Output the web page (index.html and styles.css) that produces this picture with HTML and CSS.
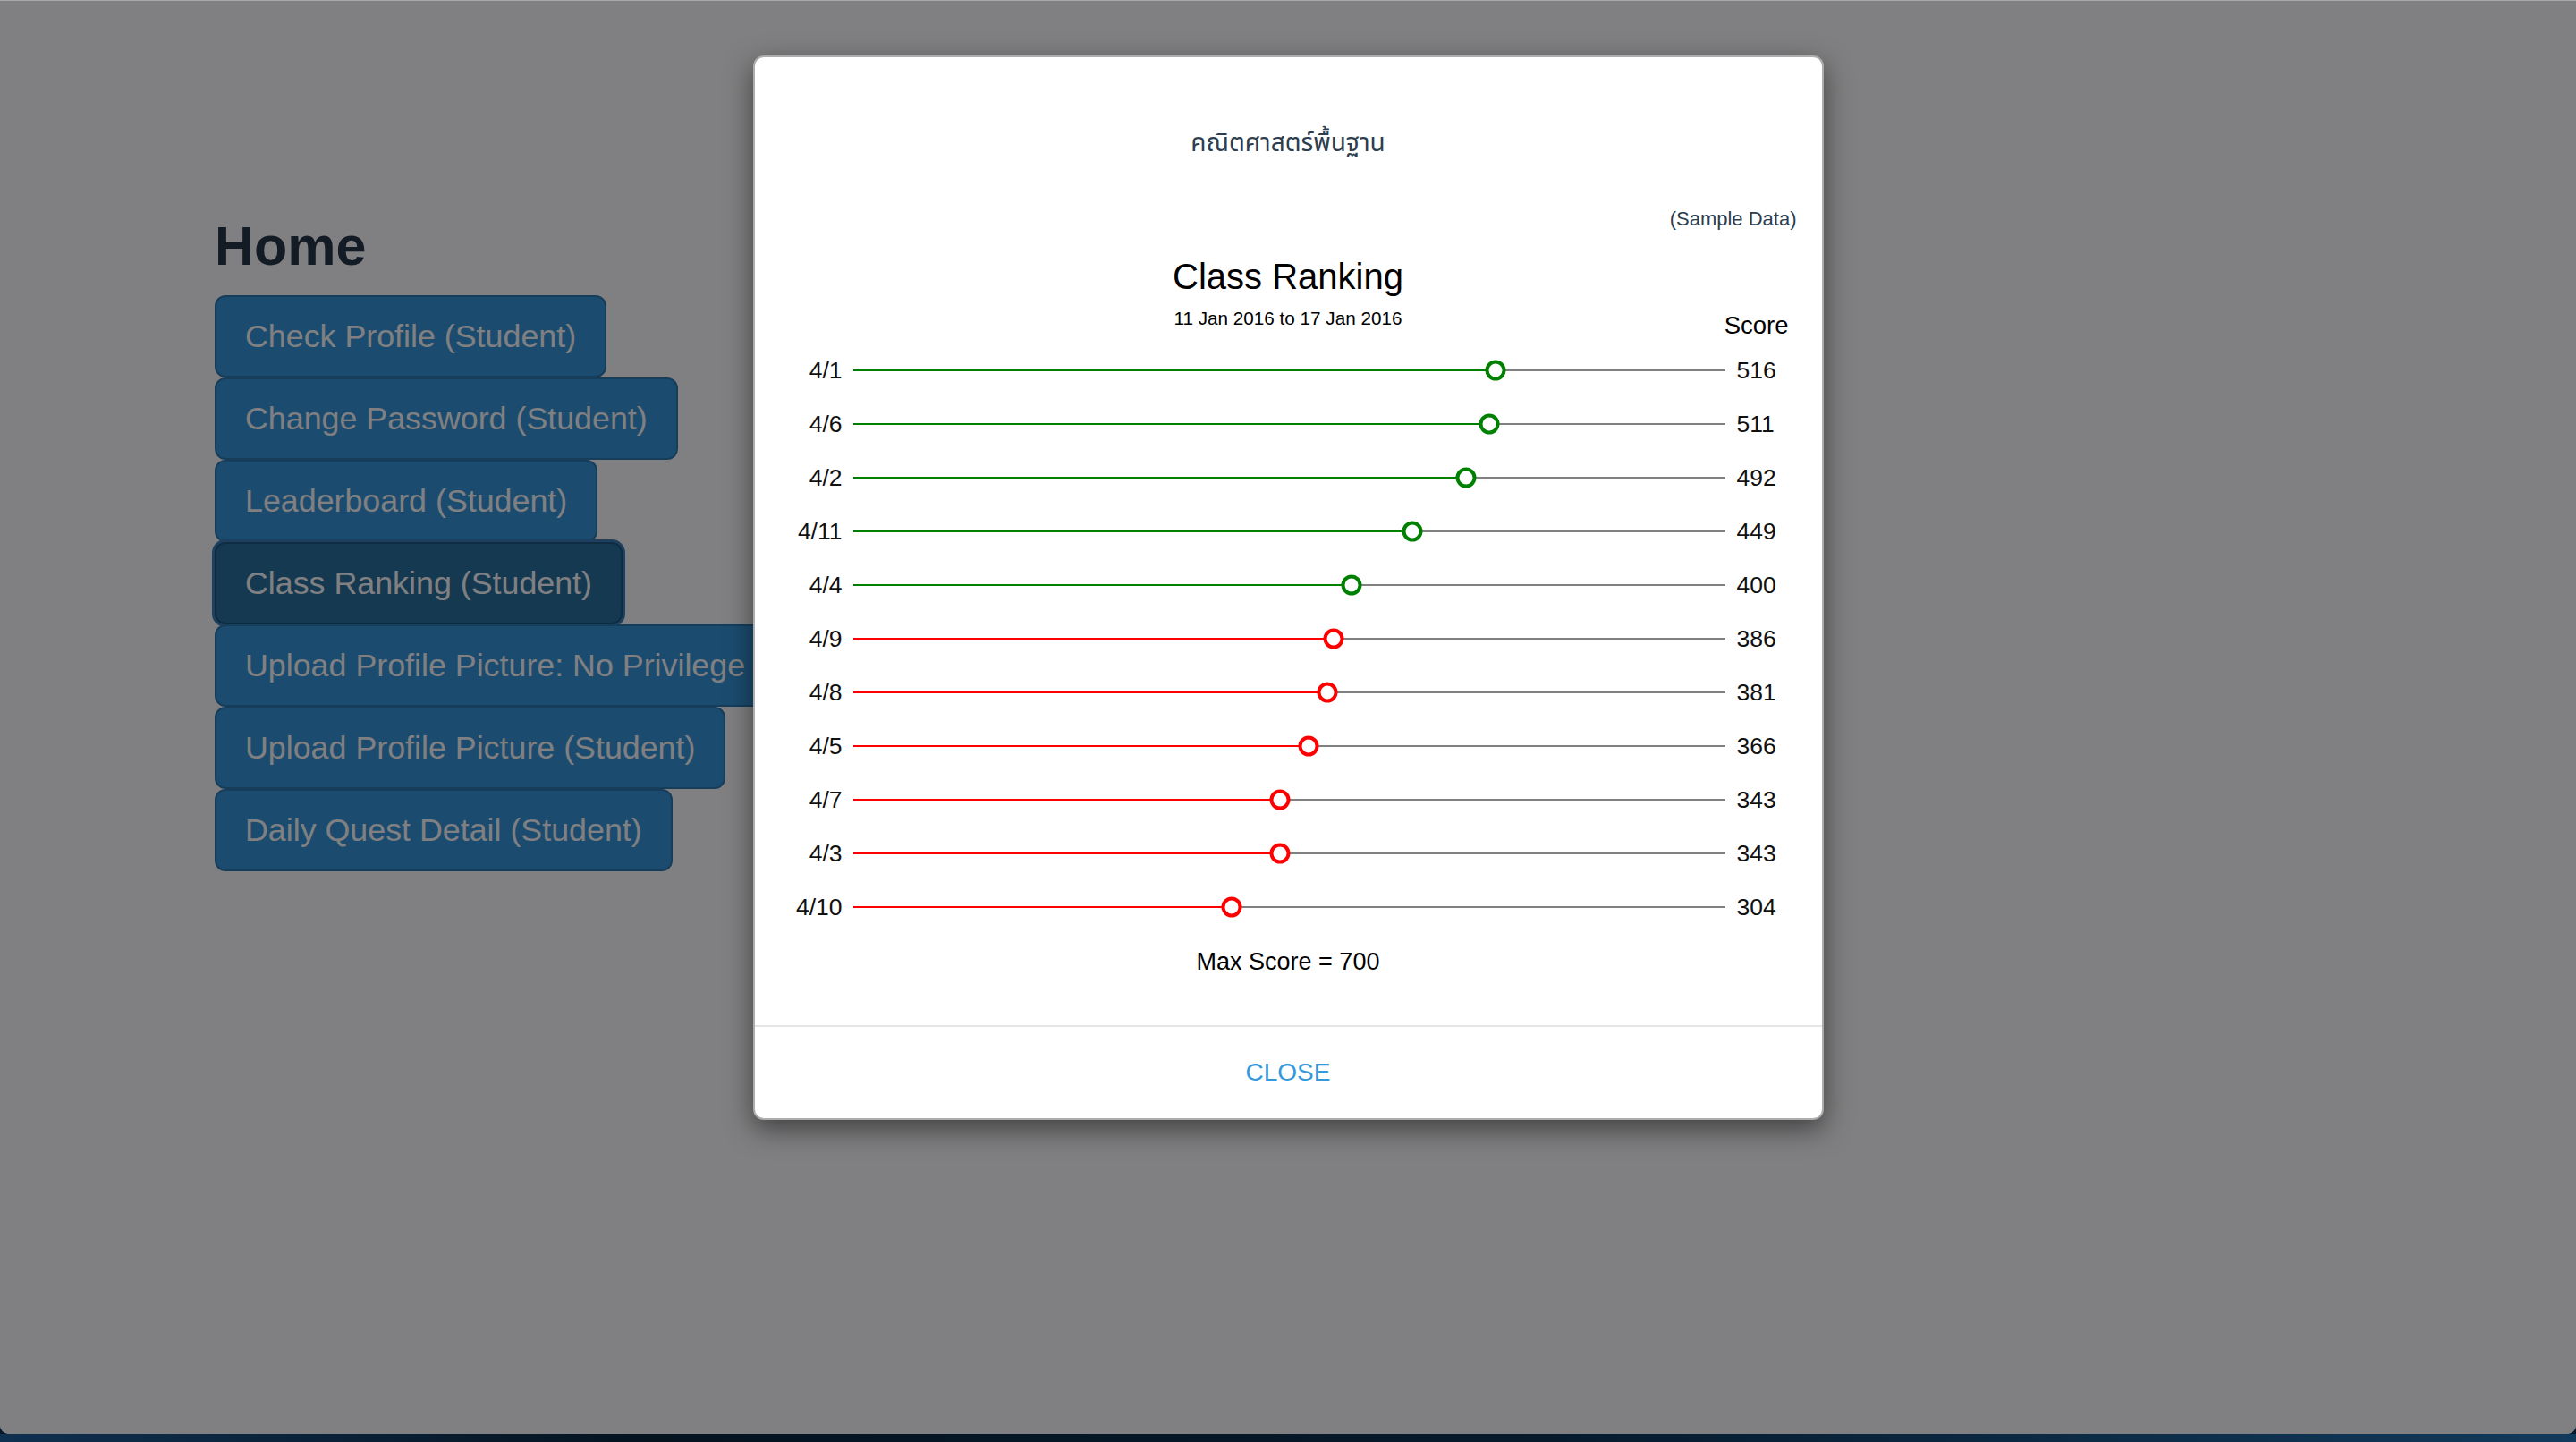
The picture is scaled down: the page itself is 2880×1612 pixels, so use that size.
FILE: index.html
```html
<!DOCTYPE html>
<html lang="en">
<head>
<meta charset="utf-8">
<title>Class Ranking</title>
<link rel="stylesheet" href="styles.css">
</head>
<body>
<div class="window">
  <main class="page">
    <h2 class="page-title">Home</h2>
    <div class="menu">
      <button class="btn">Check Profile (Student)</button>
      <button class="btn">Change Password (Student)</button>
      <button class="btn">Leaderboard (Student)</button>
      <button class="btn btn-active">Class Ranking (Student)</button>
      <button class="btn">Upload Profile Picture: No Privilege</button>
      <button class="btn">Upload Profile Picture (Student)</button>
      <button class="btn">Daily Quest Detail (Student)</button>
    </div>
  </main>

  <div class="overlay">
    <div class="modal">
      <div class="modal-head">
        <h4 class="subject">คณิตศาสตร์พื้นฐาน</h4>
      </div>
      <div class="modal-body">
        <div class="sample">(Sample Data)</div>
        <div class="chart-head">
          <div></div>
          <div class="titles">
            <div class="chart-title">Class Ranking</div>
            <div class="chart-date">11 Jan 2016 to 17 Jan 2016</div>
          </div>
          <div class="score-head">Score</div>
        </div>
        <div class="rows">
          <div class="row good"><span class="label">4/1</span><div class="track"><div class="fill" style="width:73.714%"></div><span class="dot" style="left:73.714%"></span></div><span class="value">516</span></div>
          <div class="row good"><span class="label">4/6</span><div class="track"><div class="fill" style="width:73%"></div><span class="dot" style="left:73%"></span></div><span class="value">511</span></div>
          <div class="row good"><span class="label">4/2</span><div class="track"><div class="fill" style="width:70.286%"></div><span class="dot" style="left:70.286%"></span></div><span class="value">492</span></div>
          <div class="row good"><span class="label">4/11</span><div class="track"><div class="fill" style="width:64.143%"></div><span class="dot" style="left:64.143%"></span></div><span class="value">449</span></div>
          <div class="row good"><span class="label">4/4</span><div class="track"><div class="fill" style="width:57.143%"></div><span class="dot" style="left:57.143%"></span></div><span class="value">400</span></div>
          <div class="row bad"><span class="label">4/9</span><div class="track"><div class="fill" style="width:55.143%"></div><span class="dot" style="left:55.143%"></span></div><span class="value">386</span></div>
          <div class="row bad"><span class="label">4/8</span><div class="track"><div class="fill" style="width:54.429%"></div><span class="dot" style="left:54.429%"></span></div><span class="value">381</span></div>
          <div class="row bad"><span class="label">4/5</span><div class="track"><div class="fill" style="width:52.286%"></div><span class="dot" style="left:52.286%"></span></div><span class="value">366</span></div>
          <div class="row bad"><span class="label">4/7</span><div class="track"><div class="fill" style="width:49%"></div><span class="dot" style="left:49%"></span></div><span class="value">343</span></div>
          <div class="row bad"><span class="label">4/3</span><div class="track"><div class="fill" style="width:49%"></div><span class="dot" style="left:49%"></span></div><span class="value">343</span></div>
          <div class="row bad"><span class="label">4/10</span><div class="track"><div class="fill" style="width:43.429%"></div><span class="dot" style="left:43.429%"></span></div><span class="value">304</span></div>
        </div>
        <div class="max">Max Score = 700</div>
      </div>
      <div class="modal-foot">
        <a class="close" href="#">CLOSE</a>
      </div>
    </div>
  </div>
</div>
<div class="desktop"></div>
</body>
</html>
```

FILE: styles.css
```css
html, body {
  margin: 0;
  padding: 0;
}

body {
  width: 2880px;
  height: 1612px;
  overflow: hidden;
  background: #06182a;
  font-family: "Liberation Sans", Arial, sans-serif;
}

.window {
  position: relative;
  box-sizing: border-box;
  height: 1603px;
  border-top: 1px solid #a9a9a9;
  border-radius: 0 0 10px 10px;
  overflow: hidden;
  background: #ffffff;
}

.desktop {
  height: 9px;
  background: linear-gradient(90deg, #0f3050 0%, #05131f 25%, #061a2c 60%, #0d2e4a 85%, #123a5c 100%);
}

/* ---------- page ---------- */
.page {
  padding: 241px 0 0 240px;
}

.page-title {
  margin: 0 0 22px;
  font-size: 61px;
  line-height: 66px;
  font-weight: 700;
  color: #243646;
}

.menu {
  display: flex;
  flex-direction: column;
  align-items: flex-start;
}

.btn {
  appearance: none;
  margin: 0;
  box-sizing: border-box;
  height: 92px;
  padding: 20px 32px;
  border: 2px solid #2b7cb2;
  border-radius: 12px;
  background: #3498db;
  color: #ffffff;
  font-family: "Liberation Sans", Arial, sans-serif;
  font-size: 35.8px;
  line-height: 48px;
  white-space: nowrap;
  text-align: left;
}

.btn-active {
  background: #27739f;
  border-color: #1d5a80;
  box-shadow: 0 0 0 3px #3a7fb8;
}

/* ---------- overlay & modal ---------- */
.overlay {
  position: absolute;
  inset: 0;
  background: rgba(1, 0, 3, 0.5);
  display: flex;
  justify-content: center;
  align-items: flex-start;
  padding-top: 61px;
}

.modal {
  box-sizing: border-box;
  width: 1197px;
  background: #ffffff;
  border: 2px solid rgba(0, 0, 0, 0.32);
  border-radius: 12px;
  box-shadow: 0 10px 30px rgba(0, 0, 0, 0.5);
  overflow: hidden;
}

.modal-head {
  padding-top: 77px;
  text-align: center;
}

.subject {
  margin: 0;
  font-family: "Noto Sans Thai", "Noto Sans Thai UI", "Loma", "Garuda", "Tlwg Typo", "Norasi", "DejaVu Sans", sans-serif;
  font-size: 28px;
  line-height: 40px;
  font-weight: 400;
  color: #2c3e50;
}

.modal-body {
  padding-bottom: 55px;
}

.sample {
  margin-top: 49px;
  padding-right: 28px;
  text-align: right;
  font-size: 22px;
  line-height: 30px;
  color: #2c3e50;
}

.chart-head {
  margin-top: 24px;
  display: grid;
  grid-template-columns: 1fr auto 1fr;
}

.titles {
  text-align: center;
  color: #000000;
}

.chart-title {
  font-size: 40px;
  line-height: 50px;
}

.chart-date {
  margin-top: 9px;
  margin-bottom: 12px;
  font-size: 20.7px;
  line-height: 26px;
}

.score-head {
  align-self: end;
  justify-self: end;
  padding-right: 37px;
  font-size: 27.5px;
  line-height: 34px;
  color: #000000;
}

.rows {
  margin-top: 3px;
  padding-right: 37px;
}

.row {
  display: grid;
  grid-template-columns: 98px 975px auto;
  column-gap: 12px;
  align-items: center;
  height: 60px;
  font-size: 26.5px;
  color: #111111;
}

.label {
  text-align: right;
}

.value {
  padding-left: 1px;
}

.track {
  position: relative;
  height: 60px;
}

.track::before {
  content: "";
  position: absolute;
  left: 0;
  right: 0;
  top: 29px;
  height: 2px;
  background: #808080;
}

.fill {
  position: absolute;
  left: 0;
  top: 29px;
  height: 2px;
}

.dot {
  position: absolute;
  top: 30px;
  box-sizing: border-box;
  width: 23px;
  height: 23px;
  border: 4px solid;
  border-radius: 50%;
  background: #ffffff;
  transform: translate(-50%, -50%);
}

.good .fill { background: #008000; }
.good .dot { border-color: #008000; }
.bad .fill { background: #ff0000; }
.bad .dot { border-color: #ff0000; }

.max {
  margin-top: 15px;
  text-align: center;
  font-size: 27px;
  line-height: 32px;
  color: #000000;
}

.modal-foot {
  height: 102px;
  border-top: 2px solid #e5e5e5;
  display: flex;
  align-items: center;
  justify-content: center;
}

.close {
  font-size: 28px;
  line-height: 34px;
  color: #3498db;
  text-decoration: none;
}
```
